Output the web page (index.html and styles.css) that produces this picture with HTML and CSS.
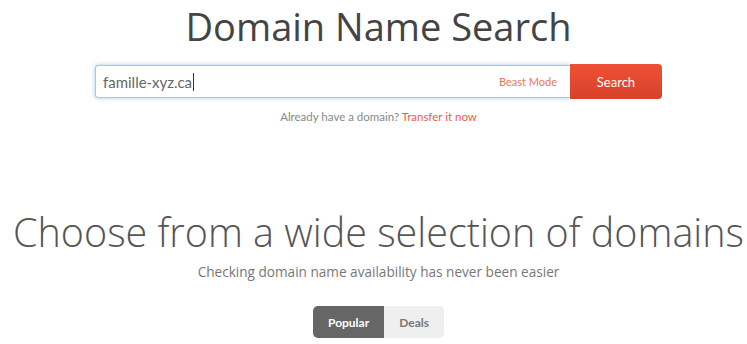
FILE: index.html
```html
<!DOCTYPE html>
<html lang="en">
<head>
    <meta charset="UTF-8">
    <meta name="viewport" content="width=device-width, initial-scale=1.0">
    <title>Domain Name Search</title>
    <link rel="stylesheet" href="styles.css">
</head>
<body>
    <div class="page">
        <!-- Search -->
        <section class="search-section">
            <h1>Domain Name Search</h1>
            <form class="search-form">
                <div class="search-field">
                    <span class="search-value">famille-xyz.ca<span class="caret"></span></span>
                    <a class="beast-mode" href="#">Beast Mode</a>
                </div>
                <button type="button" class="search-button">Search</button>
            </form>
            <p class="transfer">Already have a domain? <a href="#">Transfer it now</a></p>
        </section>

        <!-- Selection -->
        <section class="selection-section">
            <h2>Choose from a wide selection of domains</h2>
            <p class="subtitle">Checking domain name availability has never been easier</p>
            <div class="tabs">
                <button type="button" class="tab active">Popular</button>
                <button type="button" class="tab">Deals</button>
            </div>
        </section>
    </div>
</body>
</html>
```

FILE: styles.css
```css
body {
    margin: 0;
    padding: 0 0 0 10px;
    background-color: #fff;
    font-family: 'Lato', 'Open Sans', sans-serif;
    color: #555;
    overflow: hidden;
}

.page {
    display: flex;
    flex-direction: column;
    align-items: center;
}

.search-section {
    display: flex;
    flex-direction: column;
    align-items: center;
}

h1 {
    font-family: 'Open Sans', sans-serif;
    font-weight: 400;
    font-size: 38px;
    line-height: 52px;
    color: #444;
    margin: 0 0 12px;
}

.search-form {
    display: flex;
    width: 567px;
    height: 35px;
}

.search-field {
    flex: 1;
    display: flex;
    align-items: center;
    justify-content: space-between;
    margin-top: 1px;
    height: 33px;
    box-sizing: border-box;
    padding: 0 13px 0 7px;
    border: 1px solid #9fcbf2;
    border-right: none;
    border-radius: 3px 0 0 3px;
    box-shadow: 0 0 4px rgba(110, 175, 235, 0.7);
}

.search-value {
    font-size: 15px;
    color: #666;
    display: flex;
    align-items: center;
}

.caret {
    display: inline-block;
    width: 1px;
    height: 18px;
    margin-left: 1px;
    background-color: #333;
}

.beast-mode {
    font-size: 11px;
    color: #e8775e;
    text-decoration: none;
}

.search-button {
    width: 92px;
    border: none;
    border-radius: 0 4px 4px 0;
    background: linear-gradient(#ee5134, #d8402a);
    color: #fff;
    font-family: 'Lato', sans-serif;
    font-size: 13px;
    cursor: pointer;
}

.transfer {
    font-size: 11.5px;
    color: #888;
    margin: 11px 0 0;
}

.transfer a {
    color: #e9604a;
    text-decoration: none;
}

.selection-section {
    display: flex;
    flex-direction: column;
    align-items: center;
    margin-top: 85px;
}

h2 {
    font-family: 'Open Sans', sans-serif;
    font-weight: 300;
    font-size: 39.5px;
    line-height: 48px;
    color: #555;
    margin: 0;
    white-space: nowrap;
}

.subtitle {
    font-family: 'Open Sans', sans-serif;
    font-size: 13.6px;
    color: #777;
    margin: 6px 0 0;
}

.tabs {
    display: flex;
    margin-top: 25px;
}

.tab {
    height: 32px;
    border: none;
    font-family: 'Lato', sans-serif;
    font-weight: 700;
    font-size: 12px;
    padding: 0 15px;
    background-color: #efefef;
    color: #777;
    border-radius: 0 5px 5px 0;
}

.tab.active {
    background-color: #666;
    color: #fff;
    border-radius: 5px 0 0 5px;
}
```
